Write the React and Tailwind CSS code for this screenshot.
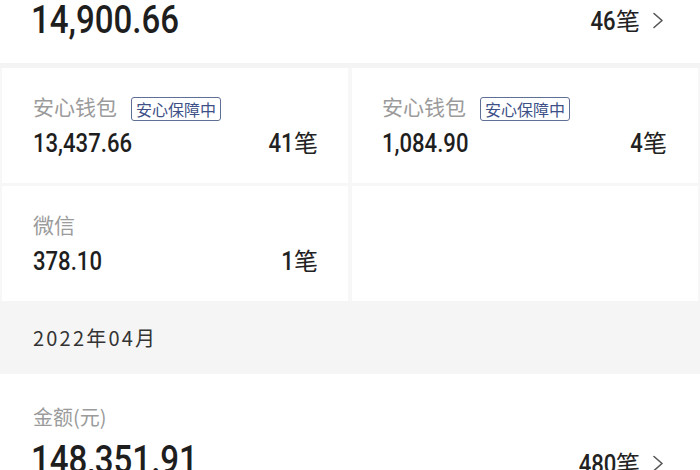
import React from "react";

const NUM = { fontFamily: '"Roboto", "Liberation Sans", sans-serif' };
const CJK = { fontFamily: '"Noto Sans CJK SC", "Noto Sans", sans-serif' };

function Chevron() {
  return (
    <svg width="12" height="17" viewBox="0 0 12 17" className="shrink-0">
      <polyline points="2,1.5 10,8.5 2,15.5" fill="none" stroke="#555" strokeWidth="1.6" strokeLinejoin="round" strokeLinecap="round" />
    </svg>
  );
}

function Count({ n, arrow }) {
  return (
    <div className="flex items-center gap-[12px] text-[#222]">
      <span className="text-[26px] leading-[26px] whitespace-nowrap">
        <span style={NUM} className="inline-block origin-right scale-x-[0.85] font-medium">{n}</span>
        <span style={CJK} className="text-[24px]">笔</span>
      </span>
      {arrow && <Chevron />}
    </div>
  );
}

function Cell({ label, badge, amount, count, left }) {
  return (
    <div className={`bg-white h-[115px] pt-[28px] ${left ? "pl-[31px] pr-[30px]" : "pl-[30px] pr-[31px]"}`}>
      <div className="flex items-center gap-[14px] h-[20px]">
        <span style={CJK} className="text-[21px] leading-[20px] text-[#9b9b9b]">{label}</span>
        {badge && (
          <span style={CJK} className="mt-[6px] h-[24px] flex items-center px-[4px] border-[1.5px] border-[#5f6f95] rounded-[3px] text-[16px] leading-[16px] text-[#3d5087]">
            安心保障中
          </span>
        )}
      </div>
      <div className="mt-[13px] flex items-baseline justify-between">
        <span style={NUM} className="inline-block origin-left scale-x-[0.85] font-medium text-[26px] leading-[26px] text-[#1e1e1e]">{amount}</span>
        <Count n={count} />
      </div>
    </div>
  );
}

export default function App() {
  return (
    <div className="w-[700px] h-[470px] overflow-hidden bg-white">
      <div className="h-[63px] pl-[31px] pr-[33px] flex justify-between items-start">
        <span style={NUM} className="inline-block origin-left scale-x-[0.87] font-medium pt-[1px] text-[38px] leading-[38px] text-[#1e1e1e]">14,900.66</span>
        <div className="mt-[7px] mr-[3px]">
          <Count n="46" arrow />
        </div>
      </div>
      <div className="h-[5px] bg-[#f4f4f4]" />
      <div className="grid grid-cols-2 gap-x-[4px] gap-y-[3px] px-[2px] bg-[#f7f7f7]">
        <Cell left label="安心钱包" badge amount="13,437.66" count="41" />
        <Cell label="安心钱包" badge amount="1,084.90" count="4" />
        <Cell left label="微信" amount="378.10" count="1" />
        <div className="bg-white h-[115px]" />
      </div>
      <div className="h-[73px] bg-[#f5f5f5] flex items-center px-[33px]">
        <span style={CJK} className="text-[20px] leading-[20px] text-[#333] tracking-[2.2px]">2022年04月</span>
      </div>
      <div className="pl-[33px] pr-[33px] pt-[33px]">
        <div style={CJK} className="text-[20px] leading-[20px] text-[#9b9b9b]">金额(元)</div>
        <div className="mt-[14px] -ml-[2px] flex items-baseline justify-between">
          <span style={NUM} className="inline-block origin-left scale-x-[0.87] font-medium text-[38px] leading-[38px] text-[#1e1e1e]">148,351.91</span>
          <div className="mr-[3px]">
            <Count n="480" arrow />
          </div>
        </div>
      </div>
    </div>
  );
}
